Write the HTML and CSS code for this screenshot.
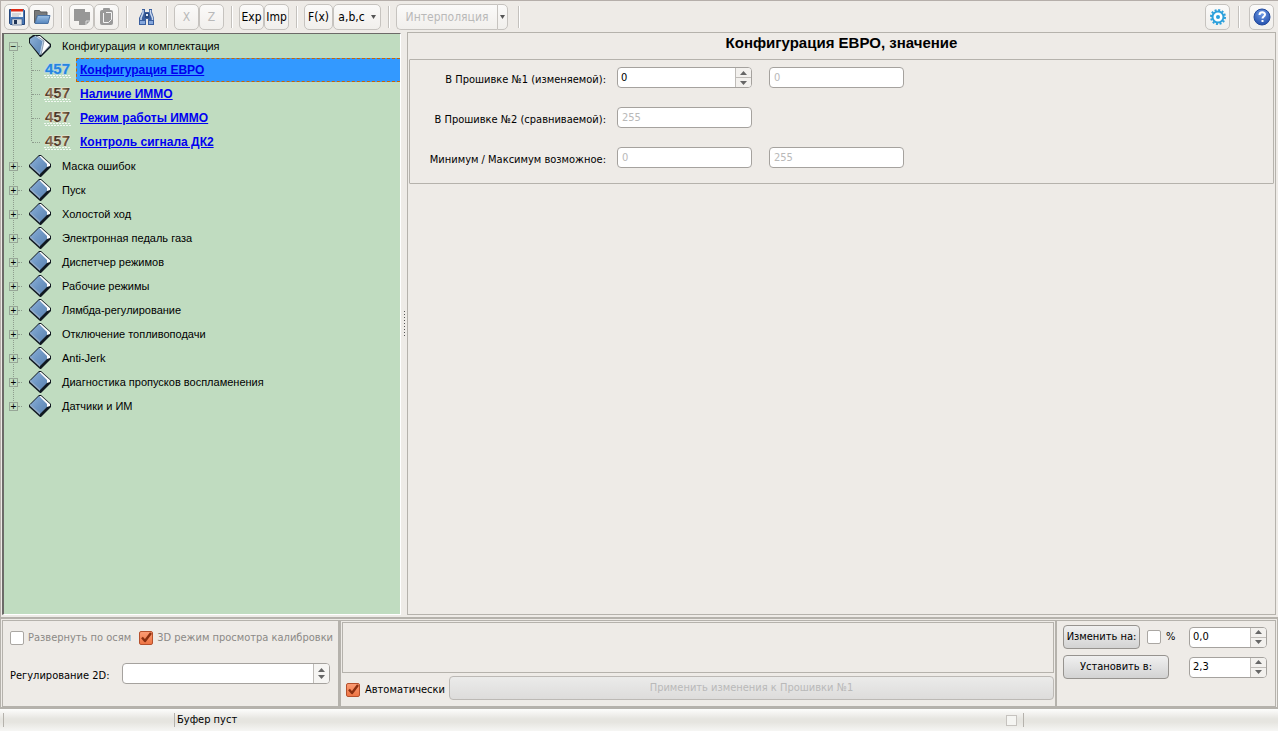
FILE: index.html
```html
<!DOCTYPE html>
<html lang="ru">
<head>
<meta charset="utf-8">
<title>Конфигурация ЕВРО</title>
<link rel="stylesheet" href="styles.css">
</head>
<body>
<svg class="defs" width="0" height="0" aria-hidden="true">
  <defs>
    <linearGradient id="cover" x1="0" y1="0" x2="1" y2="1"><stop offset="0" stop-color="#8fb2d8"/><stop offset=".5" stop-color="#6f97c4"/><stop offset="1" stop-color="#5d84b0"/></linearGradient>
    <linearGradient id="digits" x1="0" y1="0" x2="1" y2="0"><stop offset="0" stop-color="#3d3126"/><stop offset=".25" stop-color="#8a6f50"/><stop offset=".45" stop-color="#3d2f24"/><stop offset=".7" stop-color="#8a6f50"/><stop offset="1" stop-color="#4a3522"/></linearGradient>
    <linearGradient id="folder" x1="0" y1="0" x2="0" y2="1"><stop offset="0" stop-color="#9cc0e4"/><stop offset="1" stop-color="#5585bd"/></linearGradient>
    <radialGradient id="ball" cx=".5" cy=".3" r=".7"><stop offset="0" stop-color="#6f9be6"/><stop offset="1" stop-color="#2450ad"/></radialGradient>
    <symbol id="book" viewBox="0 0 24 24">
      <path d="M1 11 11 1h2l10 9v3L13 23h-1L1 13z" fill="#101820"/>
      <path d="M11 2h2l9 8v2l-3 1z" fill="#fff"/>
      <path d="M2 11 11 2l8 8v3l-7 7z" fill="url(#cover)"/>
      <path d="M2 12l10 9v-2L2 10z" fill="#93acc8"/>
    </symbol>
    <symbol id="book-open" viewBox="0 0 24 24">
      <path d="M1 4 5 1h7l11 9v3L13 23h-1L1 9z" fill="#101820"/>
      <path d="M9 2h3l10 9-9 10z" fill="#fff"/>
      <path d="M14 20l8-9v1l-8 8z" fill="#9eb2c8"/>
      <path d="M2 5 5 3l2-1 8 5-3 14L2 9z" fill="url(#cover)"/>
      <path d="M7 2 15 7l-3 14" fill="none" stroke="#bcd2ea"/>
      <path d="M9 2 16 7l-3 14" fill="none" stroke="#3d5876" stroke-width=".6"/>
    </symbol>
    <symbol id="cal" viewBox="0 0 28 16">
      <text class="cal-num" x="1" y="12">457</text>
      <path d="M0 13.500h27M1 15.500h26" stroke="#fff" stroke-width="1" stroke-dasharray="2 1" opacity=".8"/>
    </symbol>
    <symbol id="tick" viewBox="0 0 14 14"><path d="M3 6.500 6 10l6-8" fill="none" stroke="#8a2f10" stroke-width="2.400" stroke-linejoin="round"/></symbol>
    <symbol id="up" viewBox="0 0 7 4"><path d="M0 4 3.500 0 7 4z"/></symbol>
    <symbol id="down" viewBox="0 0 7 4"><path d="M0 0h7L3.500 4z"/></symbol>
  </defs>
</svg>

<header class="toolbar">
  <div class="group">
    <button class="tool" aria-label="Сохранить"><svg width="18" height="18" viewBox="0 0 18 18"><path d="M1.500 1.500h14l1 1v14h-14l-1-1z" fill="#4878b8" stroke="#24467c"/><path d="M3 1h12v8H3z" fill="#f5f5f5"/><path d="M3 1h12v2.500H3z" fill="#dd2a16"/><path d="M4 6h9M4 8h7" stroke="#b5b9bf"/><path d="M4 11h10v6H4z" fill="#dce0e4" stroke="#33527f" stroke-width=".6"/><path d="M6 12h3v4H6z" fill="#1f3457"/></svg></button>
    <button class="tool" aria-label="Открыть"><svg width="18" height="18" viewBox="0 0 18 18"><path d="M1.500 15V2.500h5l1 1.500h6.500v4H4z" fill="#77797b" stroke="#5c5e60"/><path d="M4.500 7.500h12.500l-2 8H2z" fill="url(#folder)" stroke="#4a73a5"/></svg></button>
  </div>
  <i class="sep"></i>
  <div class="group">
    <button class="tool" disabled aria-label="Копировать"><svg width="18" height="18" viewBox="0 0 18 18"><path d="M1 1h11v3h5v9l-4 4H6v-4H1z" fill="#979797"/><path d="M13 17v-4h4" fill="none" stroke="#ddd"/></svg></button>
    <button class="tool" disabled aria-label="Вставить"><svg width="18" height="18" viewBox="0 0 18 18"><rect x="2" y="2" width="13" height="15" rx="2" fill="#999"/><rect x="5" y="0" width="7" height="4" rx="1" fill="#999"/><path d="M5.500 5v9.500h4M8 4.500h5.500v7l-3 3H8" fill="none" stroke="#f5f5f5"/></svg></button>
  </div>
  <i class="sep"></i>
  <button class="tool flat" aria-label="Найти"><svg width="18" height="18" viewBox="0 0 18 18"><path d="M4 1h3v3h4V1h3v3l2 6v7h-6v-6H8v6H1v-7l3-6z" fill="#3a5f9f"/><path d="M7 5h4v5H7z" fill="#27477f"/><path d="M5 2v3L3 10v2M12.500 2v3l2 5v2" fill="none" stroke="#c9d8ef" stroke-width="1.500"/><path d="M2 13h5v3H2zM11 13h4v3h-4z" fill="#85a7dc"/><path d="M8 6h2v2H8z" fill="#e3ebf7"/></svg></button>
  <i class="sep"></i>
  <div class="group">
    <button class="tool" disabled>X</button>
    <button class="tool" disabled>Z</button>
  </div>
  <i class="sep"></i>
  <div class="group">
    <button class="tool">Exp</button>
    <button class="tool">Imp</button>
  </div>
  <i class="sep"></i>
  <div class="group">
    <button class="tool fx">F(x)</button>
    <button class="tool abc">a,b,c <svg class="arrow" width="5" height="4" viewBox="0 0 7 4" preserveAspectRatio="none"><use href="#down"/></svg></button>
  </div>
  <i class="sep"></i>
  <div class="group">
    <button class="tool interp" disabled>Интерполяция</button>
    <button class="tool drop" aria-label="Вид интерполяции"><svg class="arrow" width="5" height="4" viewBox="0 0 7 4" preserveAspectRatio="none"><use href="#down"/></svg></button>
  </div>
  <i class="sep wide"></i>
  <div class="group end">
    <button class="tool" aria-label="Настройки"><svg width="18" height="18" viewBox="0 0 18 18"><circle cx="9" cy="9" r="5.500" fill="#fff" stroke="#2ba0dc" stroke-width="2"/><circle cx="9" cy="9" r="7" fill="none" stroke="#2ba0dc" stroke-width="2" stroke-dasharray="2 1.665"/><circle cx="9" cy="9" r="2" fill="#2ba0dc"/></svg></button>
    <i class="sep"></i>
    <button class="tool" aria-label="Справка"><svg width="18" height="18" viewBox="0 0 18 18"><circle cx="9" cy="9" r="8" fill="url(#ball)" stroke="#234a9c"/><path d="M6.500 7c0-3.500 5.500-3.500 5.500-.5 0 2-2.500 2-2.500 4" fill="none" stroke="#fff" stroke-width="2"/><path d="M8.500 12h2v2h-2z" fill="#fff"/></svg></button>
  </div>
</header>

<main class="main">
  <nav class="nav">
    <ul class="tree">
      <li>
        <div class="row"><button class="toggle" aria-label="Свернуть">−</button><svg class="book"><use href="#book-open"/></svg><span>Конфигурация и комплектация</span></div>
        <ul class="branch">
          <li class="leaf current"><svg class="cal"><use href="#cal"/></svg><a href="#">Конфигурация ЕВРО</a></li>
          <li class="leaf"><svg class="cal"><use href="#cal"/></svg><a href="#">Наличие ИММО</a></li>
          <li class="leaf"><svg class="cal"><use href="#cal"/></svg><a href="#">Режим работы ИММО</a></li>
          <li class="leaf"><svg class="cal"><use href="#cal"/></svg><a href="#">Контроль сигнала ДК2</a></li>
        </ul>
      </li>
      <li class="row"><button class="toggle" aria-label="Развернуть">+</button><svg class="book"><use href="#book"/></svg><span>Маска ошибок</span></li>
      <li class="row"><button class="toggle" aria-label="Развернуть">+</button><svg class="book"><use href="#book"/></svg><span>Пуск</span></li>
      <li class="row"><button class="toggle" aria-label="Развернуть">+</button><svg class="book"><use href="#book"/></svg><span>Холостой ход</span></li>
      <li class="row"><button class="toggle" aria-label="Развернуть">+</button><svg class="book"><use href="#book"/></svg><span>Электронная педаль газа</span></li>
      <li class="row"><button class="toggle" aria-label="Развернуть">+</button><svg class="book"><use href="#book"/></svg><span>Диспетчер режимов</span></li>
      <li class="row"><button class="toggle" aria-label="Развернуть">+</button><svg class="book"><use href="#book"/></svg><span>Рабочие режимы</span></li>
      <li class="row"><button class="toggle" aria-label="Развернуть">+</button><svg class="book"><use href="#book"/></svg><span>Лямбда-регулирование</span></li>
      <li class="row"><button class="toggle" aria-label="Развернуть">+</button><svg class="book"><use href="#book"/></svg><span>Отключение топливоподачи</span></li>
      <li class="row"><button class="toggle" aria-label="Развернуть">+</button><svg class="book"><use href="#book"/></svg><span>Anti-Jerk</span></li>
      <li class="row"><button class="toggle" aria-label="Развернуть">+</button><svg class="book"><use href="#book"/></svg><span>Диагностика пропусков воспламенения</span></li>
      <li class="row"><button class="toggle" aria-label="Развернуть">+</button><svg class="book"><use href="#book"/></svg><span>Датчики и ИМ</span></li>
    </ul>
  </nav>
  <div class="splitter"><i class="grip"></i></div>
  <section class="content">
    <h1 class="title">Конфигурация ЕВРО, значение</h1>
    <form class="values">
      <label for="v1">В Прошивке №1 (изменяемой):</label>
      <div class="spin"><input id="v1" type="text" value="0"><span class="steps"><button type="button" aria-label="Больше"><svg><use href="#up"/></svg></button><button type="button" aria-label="Меньше"><svg><use href="#down"/></svg></button></span></div>
      <input class="field" type="text" value="0" disabled aria-label="Исходное значение">
      <label for="v2">В Прошивке №2 (сравниваемой):</label>
      <input class="field whole" id="v2" type="text" value="255" disabled>
      <label for="v3">Минимум / Максимум возможное:</label>
      <input class="field" id="v3" type="text" value="0" disabled>
      <input class="field" type="text" value="255" disabled aria-label="Максимум">
    </form>
  </section>
</main>

<section class="bottom">
  <div class="pane view">
    <div class="checks">
      <label class="check dim"><span class="box"><input type="checkbox" disabled><svg><use href="#tick"/></svg></span>Развернуть по осям</label>
      <label class="check dim"><span class="box"><input type="checkbox" checked disabled><svg><use href="#tick"/></svg></span>3D режим просмотра калибровки</label>
    </div>
    <div class="reg">
      <label for="reg">Регулирование 2D:</label>
      <div class="combo"><select id="reg"><option></option></select><span class="marks"><svg><use href="#up"/></svg><svg><use href="#down"/></svg></span></div>
    </div>
  </div>
  <div class="pane apply">
    <div class="log"></div>
    <div class="applyrow">
      <label class="check"><span class="box"><input type="checkbox" checked><svg><use href="#tick"/></svg></span>Автоматически</label>
      <button class="btn grow" disabled>Применить изменения к Прошивки №1</button>
    </div>
  </div>
  <div class="pane change">
    <div class="line">
      <button class="btn">Изменить на:</button>
      <label class="check pct"><span class="box"><input type="checkbox"><svg><use href="#tick"/></svg></span>%</label>
      <div class="spin small"><input type="text" value="0,0" aria-label="Изменить на"><span class="steps"><button type="button" aria-label="Больше"><svg><use href="#up"/></svg></button><button type="button" aria-label="Меньше"><svg><use href="#down"/></svg></button></span></div>
    </div>
    <div class="line">
      <button class="btn set">Установить в:</button>
      <div class="spin small"><input type="text" value="2,3" aria-label="Установить в"><span class="steps"><button type="button" aria-label="Больше"><svg><use href="#up"/></svg></button><button type="button" aria-label="Меньше"><svg><use href="#down"/></svg></button></span></div>
    </div>
  </div>
</section>

<footer class="status">
  <span class="cell first"></span>
  <span class="cell text">Буфер пуст</span>
  <span class="square"></span>
  <span class="cell last"></span>
</footer>
</body>
</html>
```
FILE: styles.css
```css
* { box-sizing: border-box; }

html, body { height: 100%; }

body {
  margin: 0;
  display: flex;
  flex-direction: column;
  background: #eeebe7;
  color: #000;
  font: 11px/14px "DejaVu Sans Condensed", "DejaVu Sans", sans-serif;
}

button, input, select { font: inherit; color: inherit; margin: 0; }
svg { display: block; }
.defs { position: absolute; }

/* Toolbar */
.toolbar {
  display: flex;
  align-items: center;
  height: 32px;
  padding: 1px 4px 0 3px;
  border-top: 1px solid #b5aeaa;
  border-left: 1px solid #b5aeaa;
  flex: none;
}
.group { display: flex; align-items: center; }
.end { margin-left: auto; }
.tool {
  width: 25px;
  height: 26px;
  padding: 0;
  display: flex;
  align-items: center;
  justify-content: center;
  border: 1px solid #c6c3bf;
  border-radius: 5px;
  background: linear-gradient(#fbfaf9, #f1efec);
  white-space: nowrap;
}
.tool:disabled { color: #b9b9b9; }
.tool.flat { border-color: transparent; background: none; }
.tool.fx { width: 29px; }
.tool.abc { width: 48px; gap: 6px; }
.tool.interp { width: 101px; border-radius: 5px 0 0 5px; border-right: 0; }
.tool.drop { width: 11px; border-radius: 0 5px 5px 0; }
.arrow { fill: #555; }
.sep { width: 2px; height: 22px; margin: 0 6px 0 7px; background: #c4c1bd; border-right: 1px solid #fff; }
.wide { margin-left: 10px; }
.end .sep { margin: 0 9px 0 8px; }

/* Main area */
.main { flex: 1; min-height: 0; display: flex; padding: 0 2px 2px 1px; border-left: 1px solid #b5aeaa; }
.nav {
  width: 399px;
  flex: none;
  overflow: hidden;
  margin-top: 1px;
  border: 1px solid #fff;
  border-top: 1px solid #6c6a68;
  border-left: 2px solid #6c6a68;
  background: #c0dcc0;
  font-family: "Liberation Sans", Arial, sans-serif;
}
.tree, .branch { list-style: none; margin: 0; padding: 0; }
.tree {
  background: repeating-linear-gradient(#8d9c8d 0 1px, transparent 1px 2px) 9px 12px / 1px calc(100% - 24px) no-repeat;
}
.row { display: flex; align-items: center; height: 24px; padding-left: 5px; }
.toggle {
  width: 9px;
  height: 9px;
  padding: 0;
  border: 1px solid #97a697;
  background: #c0dcc0;
  font: 10px/7px "Liberation Sans", Arial, sans-serif;
  display: flex;
  align-items: center;
  justify-content: center;
}
.row::before { content: ""; order: 1; width: 4px; border-top: 1px dotted #8d9c8d; }
.row > .book { order: 2; width: 24px; height: 24px; margin: 0 10px 0 6px; }
.row > span { order: 3; }
.branch {
  background: repeating-linear-gradient(#8d9c8d 0 1px, transparent 1px 2px) 27px 0 / 1px calc(100% - 12px) no-repeat;
}
.leaf { display: flex; align-items: center; height: 24px; padding-left: 28px; }
.leaf::before { content: ""; width: 8px; border-top: 1px dotted #8d9c8d; margin-right: 4px; }
.cal { width: 28px; height: 16px; margin-right: 4px; }
.cal-num {
  font: bold 15px "Liberation Sans", Arial, sans-serif;
  fill: var(--digit, url(#digits));
  stroke: var(--digit-edge, #efe5d2);
  stroke-width: 1px;
  paint-order: stroke;
}
.leaf a { flex: 1; padding: 4px 3px; border: 1px solid transparent; font-size: 12px; font-weight: bold; color: #0000f0; }
.leaf.current a { background: #3399ff; border: 1px dashed #cc6600; border-right: 0; }
.current { --digit: #2585e0; --digit-edge: #9fcdf0; }

.splitter { width: 6px; flex: none; display: flex; align-items: center; justify-content: center; }
.grip { width: 1px; height: 26px; background: repeating-linear-gradient(#555 0 1px, transparent 1px 3px); }

.content { flex: 1; min-width: 0; border: 1px solid #b5b2ac; padding: 0 1px; }
.title { margin: 0; height: 26px; font: bold 15px/20px "Liberation Sans", Arial, sans-serif; text-align: center; }
.values {
  display: grid;
  grid-template-columns: 196px 141px 135px;
  gap: 19px 11px;
  padding: 7px 0 15px;
  border: 1px solid #b5b2ac;
  border-radius: 1px;
}
.values > label { text-align: right; padding-top: 6px; height: 21px; }

.field, .spin, .combo {
  width: 135px;
  height: 21px;
  border: 1px solid #a5a29e;
  border-radius: 4px;
  background: #fff;
}
.field { padding: 0 4px; }
.field:disabled { color: #b9b9b9; }
.whole { grid-column: 2 / 4; }
.spin { display: flex; overflow: hidden; }
.spin input { flex: 1; min-width: 0; border: 0; padding: 0 3px; background: none; }
.steps { width: 16px; display: flex; flex-direction: column; border-left: 1px solid #bfbcb8; background: #f3f1ee; }
.steps button { flex: 1; padding: 0; border: 0; background: none; display: flex; align-items: center; justify-content: center; }
.steps button + button { border-top: 1px solid #bfbcb8; }
.steps svg, .marks svg { width: 7px; height: 4px; fill: #666; }

/* Bottom panels */
.bottom {
  flex: none;
  display: flex;
  height: 92px;
  padding: 1px 1px 0;
  border: 1px solid #b5b2ac;
  border-top-width: 2px;
  border-bottom-width: 2px;
}
.pane { border: 1px solid #b5b2ac; }
.view { width: 337px; flex: none; padding: 10px 7px; }
.apply { flex: 1; padding: 1px; border-left-width: 2px; min-width: 0; }
.change { width: 220px; flex: none; padding: 4px 8px 0 6px; }
.checks { display: flex; gap: 8px; height: 14px; align-items: center; }
.check { display: flex; align-items: center; gap: 5px; white-space: nowrap; }
.checks .check { gap: 4px; }
.dim { color: #8b8986; }
.box { display: grid; width: 14px; height: 14px; }
.box > * { grid-area: 1 / 1; width: 14px; height: 14px; }
.box svg { visibility: hidden; pointer-events: none; }
.box input { appearance: none; border: 1px solid #aaa7a3; border-radius: 2px; background: #fff; }
.box input:checked { border-color: #b5502c; background: linear-gradient(#fb9b73, #ee7544); }
.box input:checked + svg { visibility: visible; }
.reg { display: flex; align-items: center; margin-top: 18px; }
.reg label { width: 112px; padding-top: 4px; }
.combo { width: 208px; display: grid; grid-template-columns: 1fr 16px; overflow: hidden; }
.combo select { grid-area: 1 / 1 / 2 / 3; appearance: none; border: 0; background: none; height: 19px; }
.marks { grid-area: 1 / 2; display: flex; flex-direction: column; align-items: center; justify-content: center; gap: 3px; border-left: 1px solid #bfbcb8; background: #f6f5f3; pointer-events: none; }
.log { height: 51px; border: 1px solid #b5b2ac; }
.applyrow { display: flex; align-items: center; gap: 4px; padding: 3px 0 0 4px; }
.applyrow .check { padding-top: 4px; }
.btn {
  height: 24px;
  padding: 0 2px;
  border: 1px solid #96938f;
  border-radius: 4px;
  background: linear-gradient(#f0f0f0, #d3d3d3);
  white-space: nowrap;
}
.btn:disabled { color: #b9b9b9; border-color: #bcb9b5; background: linear-gradient(#ebebea, #dddcdb); }
.grow { flex: 1; }
.line { display: flex; align-items: center; height: 24px; margin-bottom: 6px; }
.line .btn { width: 77px; }
.line .set { width: 106px; }
.pct { margin-left: 7px; }
.small { width: 78px; margin-left: auto; }

.tool { font-size: 12px; }

/* Status bar */
.status {
  flex: none;
  display: flex;
  align-items: center;
  height: 22px;
  padding-left: 3px;
  background: linear-gradient(#fdfdfc, #e6e5e0 45%, #e6e5e0 60%, #f6f6f4);
}
.cell { border-left: 1px solid #b5b2ac; height: 14px; padding-left: 2px; }
.first { width: 171px; }
.text { flex: 1; }
.square { width: 11px; height: 11px; border: 1px solid #c6c3bf; background: #f5f5f2; }
.last { width: 255px; margin-left: 6px; }
```
